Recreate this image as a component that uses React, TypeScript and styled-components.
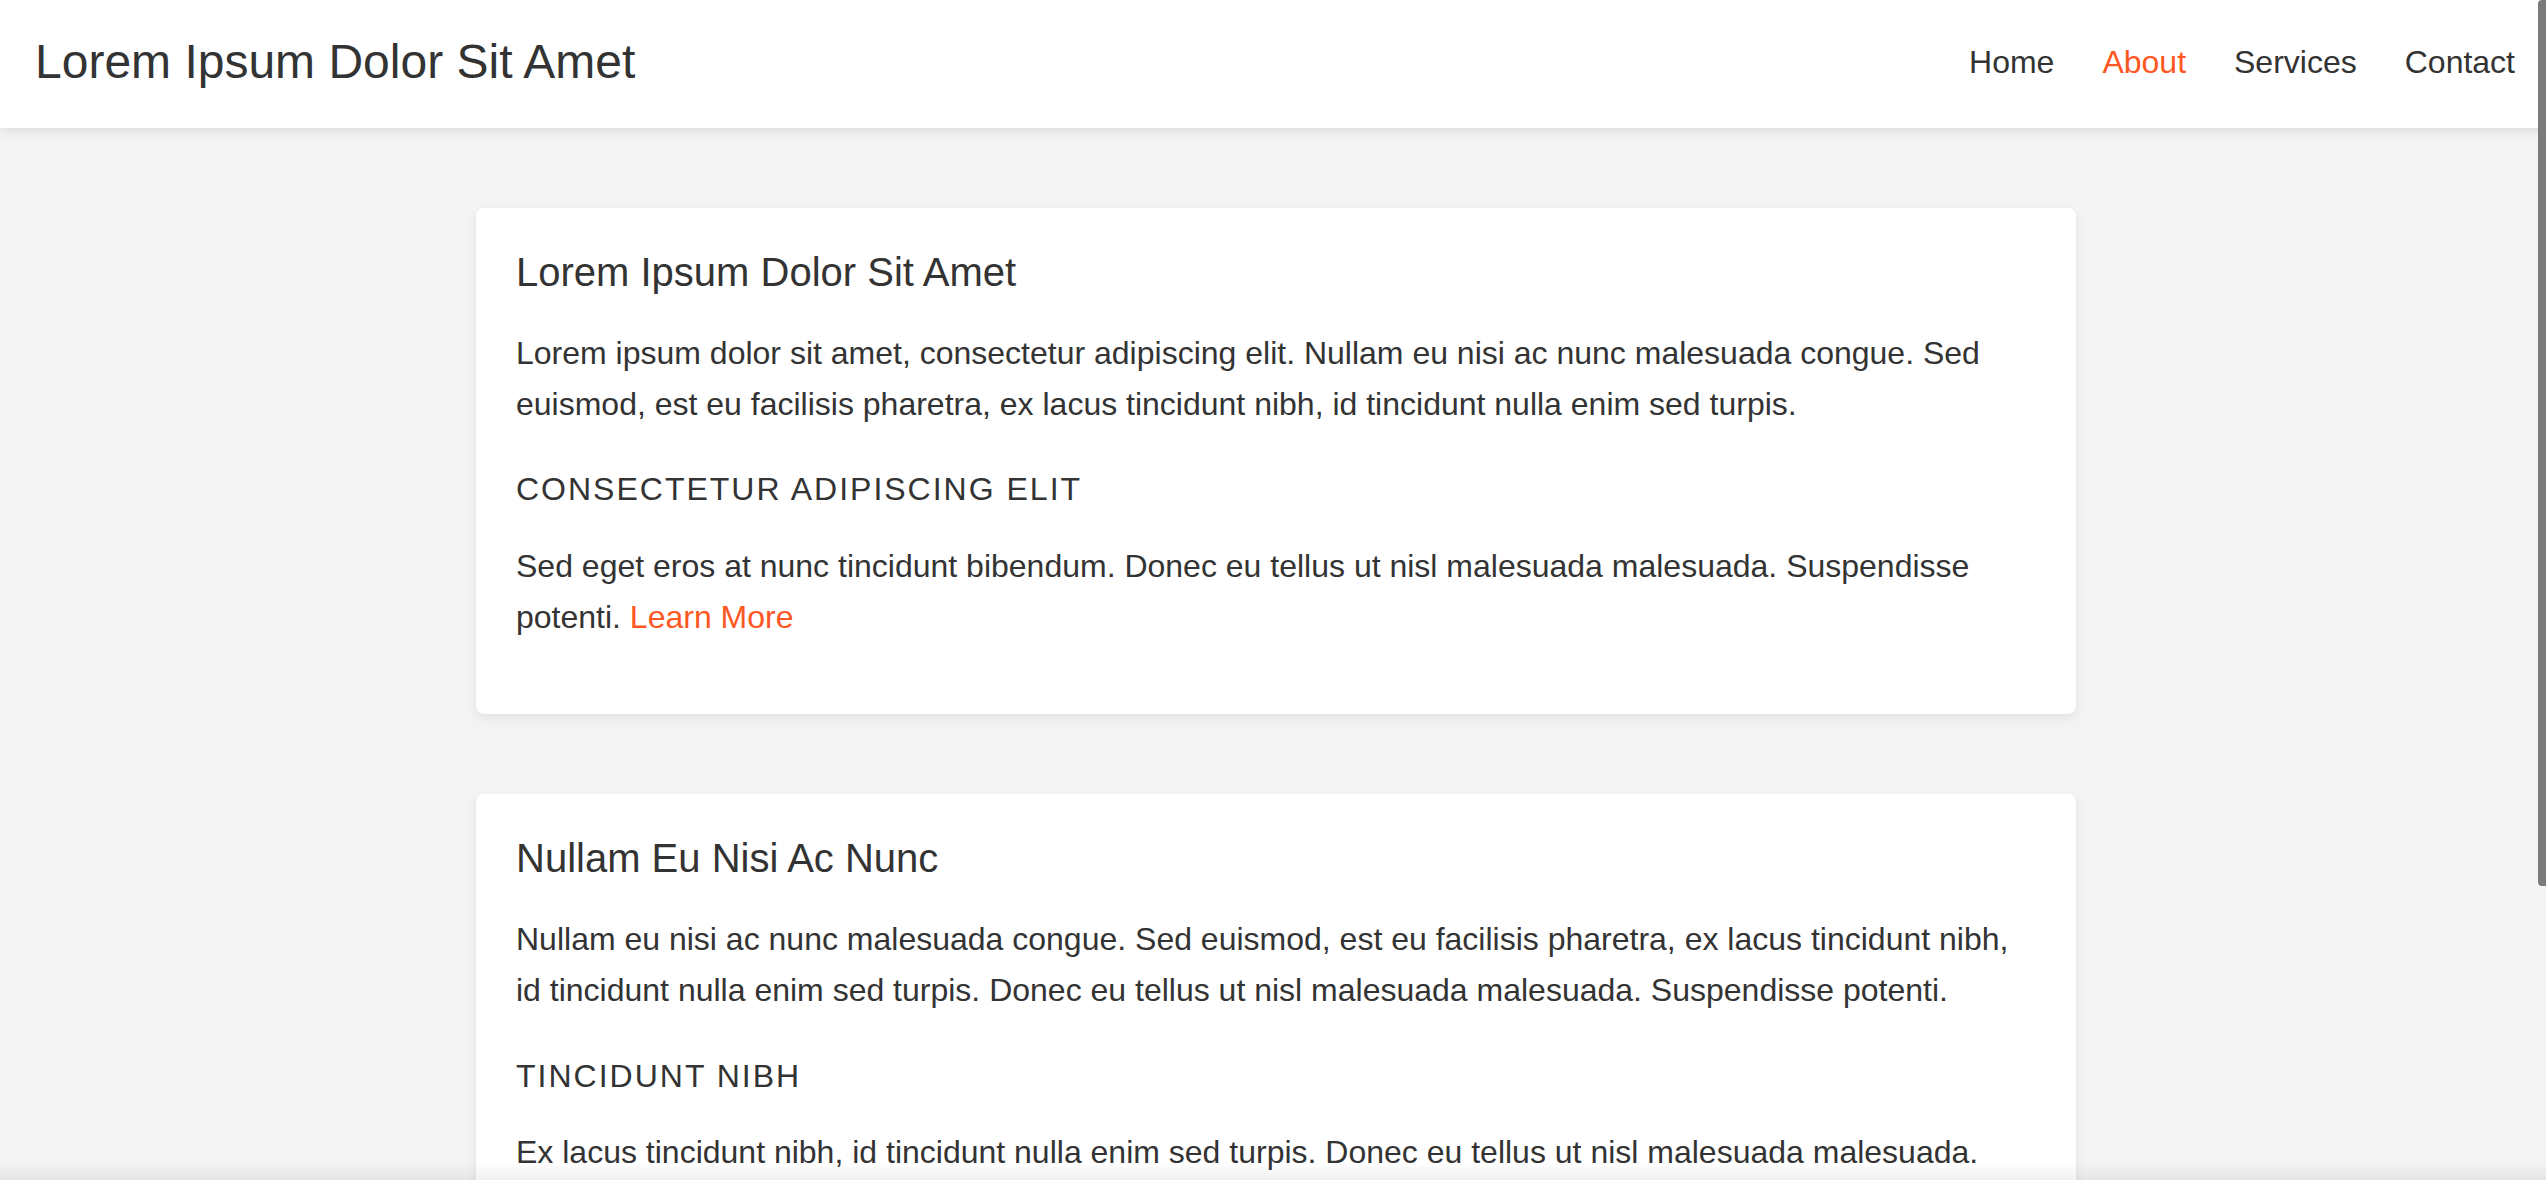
import React, { FC } from "react";
import styled, { createGlobalStyle } from "styled-components";

const accent = "#ff5722";
const ink = "#333333";

const GlobalStyle = createGlobalStyle`
  html,
  body {
    margin: 0;
    padding: 0;
    overflow: hidden;
  }

  body {
    background: #f4f4f4;
    color: ${ink};
    font-family: "Liberation Sans", Arial, Helvetica, sans-serif;
  }
`;

interface Section {
  title: string;
  intro: string;
  subtitle: string;
  body: string;
  link?: string;
}

const sections: Section[] = [
  {
    title: "Lorem Ipsum Dolor Sit Amet",
    intro:
      "Lorem ipsum dolor sit amet, consectetur adipiscing elit. Nullam eu nisi ac nunc malesuada congue. Sed euismod, est eu facilisis pharetra, ex lacus tincidunt nibh, id tincidunt nulla enim sed turpis.",
    subtitle: "Consectetur Adipiscing Elit",
    body: "Sed eget eros at nunc tincidunt bibendum. Donec eu tellus ut nisl malesuada malesuada. Suspendisse potenti.",
    link: "Learn More",
  },
  {
    title: "Nullam Eu Nisi Ac Nunc",
    intro:
      "Nullam eu nisi ac nunc malesuada congue. Sed euismod, est eu facilisis pharetra, ex lacus tincidunt nibh, id tincidunt nulla enim sed turpis. Donec eu tellus ut nisl malesuada malesuada. Suspendisse potenti.",
    subtitle: "Tincidunt Nibh",
    body: "Ex lacus tincidunt nibh, id tincidunt nulla enim sed turpis. Donec eu tellus ut nisl malesuada malesuada. Suspendisse potenti.",
    link: "Learn More",
  },
];

const navItems = ["Home", "About", "Services", "Contact"];

const App: FC = () => {
  return (
    <>
      <GlobalStyle />
      <Header>
        <SiteTitle>Lorem Ipsum Dolor Sit Amet</SiteTitle>
        <Nav>
          {navItems.map((item) => (
            <NavLink key={item} href="#" $active={item === "About"}>
              {item}
            </NavLink>
          ))}
        </Nav>
      </Header>
      <Main>
        {sections.map((s) => (
          <Card key={s.title}>
            <CardTitle>{s.title}</CardTitle>
            <Paragraph>{s.intro}</Paragraph>
            <SubTitle>{s.subtitle}</SubTitle>
            <Paragraph>
              {s.body} {s.link && <InlineLink href="#">{s.link}</InlineLink>}
            </Paragraph>
          </Card>
        ))}
      </Main>
      <BottomFade />
      <ScrollThumb />
    </>
  );
};

export default App;

const Header = styled.header`
  height: 128px;
  padding: 0 31px 0 35px;
  display: flex;
  align-items: center;
  justify-content: space-between;
  background: #ffffff;
  box-shadow: 0 3px 10px rgba(0, 0, 0, 0.1);
  position: relative;
  z-index: 1;
`;

const SiteTitle = styled.h1`
  margin: 0 0 4px;
  font-size: 48px;
  font-weight: 400;
  line-height: 1.2;
  color: ${ink};
`;

const Nav = styled.nav`
  display: flex;
  gap: 48px;
  margin-bottom: 4px;
`;

const NavLink = styled.a<{ $active?: boolean }>`
  font-size: 32px;
  line-height: 1.2;
  color: ${(p) => (p.$active ? accent : ink)};
  text-decoration: none;
`;

const Main = styled.main`
  display: flex;
  flex-direction: column;
  align-items: center;
  gap: 80px;
  padding: 80px 0 80px 6px;
`;

const Card = styled.section`
  box-sizing: border-box;
  width: 1600px;
  padding: 40px 40px 39px;
  background: #ffffff;
  border-radius: 8px;
  box-shadow: 0 4px 12px rgba(0, 0, 0, 0.08);
`;

const CardTitle = styled.h2`
  margin: 0 0 32px;
  font-size: 40px;
  font-weight: 400;
  line-height: 48px;
`;

const Paragraph = styled.p`
  margin: 0 0 32px;
  font-size: 32px;
  line-height: 1.6;
`;

const SubTitle = styled.h3`
  margin: 40px 0 32px;
  font-size: 32px;
  font-weight: 400;
  line-height: 1.2;
  letter-spacing: 2px;
  text-transform: uppercase;
`;

const InlineLink = styled.a`
  color: ${accent};
  text-decoration: none;
`;

const BottomFade = styled.div`
  position: fixed;
  left: 0;
  right: 0;
  bottom: 0;
  height: 18px;
  background: linear-gradient(to bottom, rgba(0, 0, 0, 0), rgba(0, 0, 0, 0.06));
  pointer-events: none;
  z-index: 2;
`;

const ScrollThumb = styled.div`
  position: fixed;
  top: 0;
  right: 0;
  width: 8px;
  height: 886px;
  background: #7b7b7b;
  border-radius: 4px 0 0 4px;
  z-index: 3;
`;
